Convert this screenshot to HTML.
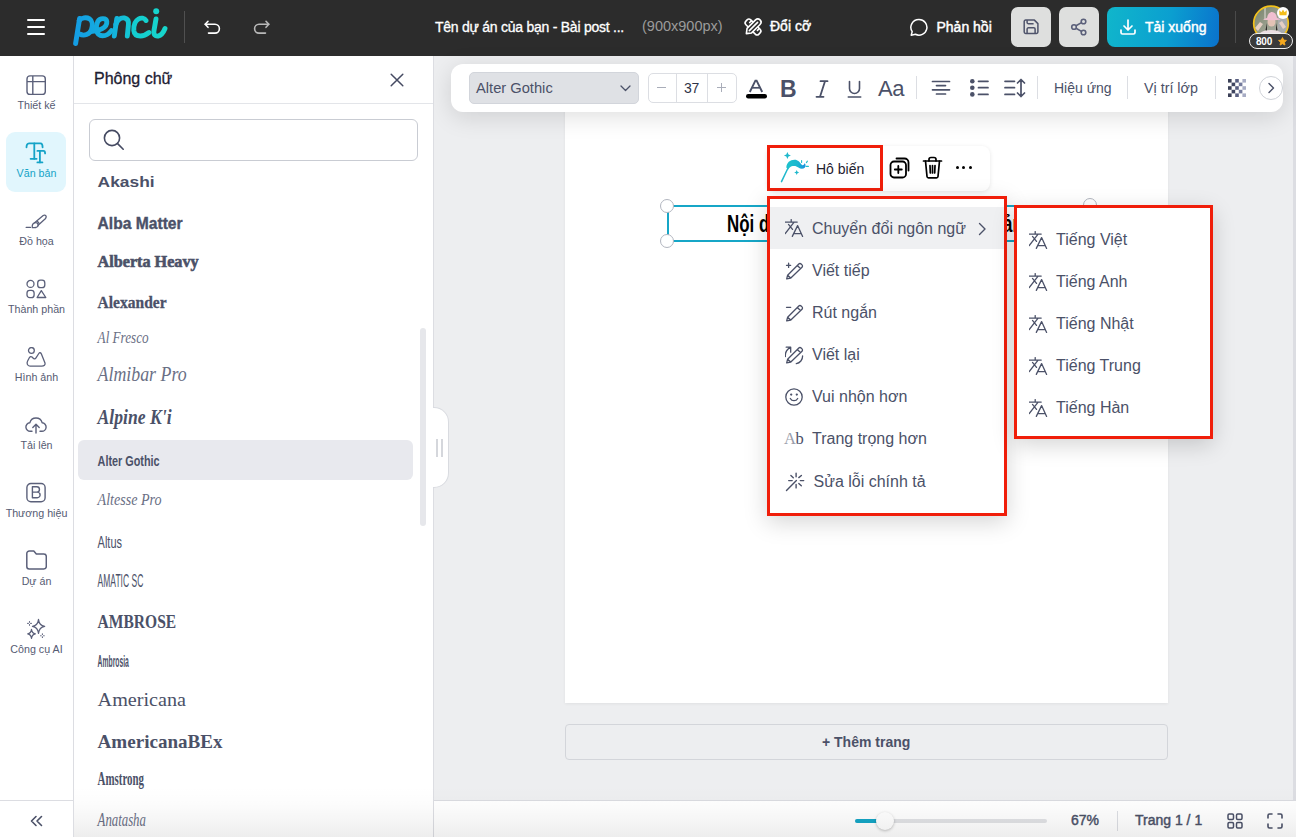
<!DOCTYPE html>
<html><head><meta charset="utf-8">
<style>
*{margin:0;padding:0;box-sizing:border-box}
html,body{width:1296px;height:837px;overflow:hidden;background:#edeef0;font-family:"Liberation Sans",sans-serif;position:relative}
.a{position:absolute}
svg{display:block}
#top{left:0;top:0;width:1296px;height:56px;background:#2c2c2c}
.tw{color:#fff;white-space:nowrap}
#side{left:0;top:56px;width:74px;height:781px;background:#fff;border-right:1px solid #dcdde2}
.si{left:6px;width:60px;height:60px;border-radius:9px}
.si .lb{position:absolute;left:-6px;width:72px;text-align:center;font-size:11px;color:#565b73;white-space:nowrap}
#panel{left:74px;top:56px;width:360px;height:781px;background:#fff;border-right:1px solid #dcdde2}
.fn{position:absolute;left:24px;color:#4b5168;white-space:nowrap}
#canvas{left:434px;top:56px;width:862px;height:744px;background:#edeef0}
#page{left:565px;top:104px;width:603px;height:599px;background:#fff}
#tb{left:451px;top:64px;width:832px;height:48px;background:#fff;border-radius:12px;box-shadow:0 5px 24px rgba(0,0,0,.13)}
.menu{background:#fff;box-shadow:0 6px 22px rgba(0,0,0,.17)}
.mi{position:absolute;left:0;height:42px;width:100%;font-size:15.5px;color:#4b5168;white-space:nowrap}
.red{border:3px solid #f01e0a}
#bot{left:434px;top:800px;width:862px;height:37px;background:#fff;border-top:1px solid #dadbe0}
.lbl{left:0;width:73px;text-align:center;font-size:10.7px;line-height:14px;color:#565b73;white-space:nowrap}
.mt{left:812px;font-size:16px;line-height:20px;color:#4b5168;white-space:nowrap}
.st{left:1029px}
</style></head><body>

<!-- TOP BAR -->
<div id="top" class="a">
  <div class="a" style="left:27px;top:19px;width:18px;height:2px;background:#fff;border-radius:1px"></div>
  <div class="a" style="left:27px;top:26px;width:18px;height:2px;background:#fff;border-radius:1px"></div>
  <div class="a" style="left:27px;top:33px;width:18px;height:2px;background:#fff;border-radius:1px"></div>
  <svg class="a" style="left:70px;top:6px" width="100" height="42" viewBox="0 0 100 42">
    <defs><linearGradient id="lg" gradientUnits="userSpaceOnUse" x1="5" y1="0" x2="95" y2="0"><stop offset="0" stop-color="#149de4"/><stop offset="0.45" stop-color="#14b4dc"/><stop offset="0.65" stop-color="#13cdd0"/><stop offset="1" stop-color="#17d6cc"/></linearGradient></defs>
    <g fill="none" stroke="url(#lg)" stroke-width="4.9" stroke-linecap="round" stroke-linejoin="round">
      <path d="M9.6 12.5L5.6 37.5"/>
      <path d="M9.2 14.5C11.5 11.5 16.5 11 19.5 12.8C22.5 14.8 22.8 19.5 21.5 23.5C19.8 28.5 14 30.5 9.5 28"/>
      <path d="M21 25.5C28 25.5 37.5 22 36.8 15.5C36.3 11.8 30 11.5 27.8 15.5C25.3 20.5 25.5 29.8 32.5 29.8C36 29.8 39.5 27.5 41.5 24.5"/>
      <path d="M44.3 30L46.8 12.5"/>
      <path d="M45.8 18.5C48 13 51.5 11.5 54.5 12C58.2 12.7 59 15.5 58.3 20L57.3 30"/>
      <path d="M76 14.5C74.5 11.8 71 11.5 68.5 13C64.8 15.2 63.5 20 63.8 24.5C64.2 28.5 67 30 70.5 30C73.5 30 76.5 28.5 79 26.5"/>
      <path d="M86 13L84 24.5C83.3 29 85.5 30.5 88.2 30C91.5 29.3 93.8 25.5 95 22.5"/>
    </g>
    <circle cx="86.2" cy="5.3" r="3" fill="#16d3cd"/>
  </svg>
  <div class="a" style="left:184px;top:11px;width:1px;height:32px;background:#505050"></div>
  <svg class="a" style="left:203px;top:20px" width="20" height="16" viewBox="0 0 20 16" fill="none" stroke="#fff" stroke-width="1.6" stroke-linecap="round" stroke-linejoin="round">
    <path d="M2.2 4.3h9.8a4.4 4.4 0 0 1 0 8.8H5.5"/><path d="M5 1.3L2.2 4.3 5 7.3"/>
  </svg>
  <svg class="a" style="left:251px;top:20px" width="20" height="16" viewBox="0 0 20 16" fill="none" stroke="#b9b9b9" stroke-width="1.6" stroke-linecap="round" stroke-linejoin="round">
    <path d="M17.8 4.3H8a4.4 4.4 0 0 0 0 8.8h6.5"/><path d="M15 1.3l2.8 3L15 7.3"/>
  </svg>
  <div class="a tw" style="left:435px;top:17.5px;font-size:14px;letter-spacing:-0.25px;line-height:18px;-webkit-text-stroke:0.3px #fff">Tên dự án của bạn - Bài post ...</div>
  <div class="a tw" style="left:642px;top:17px;font-size:14.5px;line-height:18px;color:#9b9b9b">(900x900px)</div>
  <svg class="a" style="left:740px;top:14px" width="26" height="26" viewBox="0 0 26 26" fill="none" stroke="#fff" stroke-width="1.6" stroke-linejoin="round" stroke-linecap="round">
    <g transform="rotate(45 13 13)"><rect x="3.8" y="9.6" width="18.4" height="6.8" rx="2.6"/><path d="M7.5 9.6v2.6M18.5 9.6v2.6"/></g>
    <g transform="rotate(-45 13 13)"><path d="M3.6 13L7.8 9.8H19.8A3.2 3.2 0 0 1 19.8 16.2H7.8Z" fill="#2c2c2c"/><path d="M7.8 13H19.5"/></g>
  </svg>
  <div class="a tw" style="left:770px;top:17px;font-size:14px;line-height:18px;-webkit-text-stroke:0.4px #fff">Đổi cỡ</div>
  <svg class="a" style="left:909px;top:18px" width="20" height="19" viewBox="0 0 20 19" fill="none" stroke="#fff" stroke-width="1.5" stroke-linejoin="round">
    <path d="M10 1.5a8 7.8 0 1 1-3.6 14.8L2.2 17.2l1-3.6A8 7.8 0 0 1 10 1.5z"/>
  </svg>
  <div class="a tw" style="left:936.5px;top:17.5px;font-size:14px;line-height:18px;-webkit-text-stroke:0.45px #fff">Phản hồi</div>
  <div class="a" style="left:1011px;top:7px;width:40px;height:40px;background:#dedfde;border-radius:7px"></div>
  <svg class="a" style="left:1021px;top:17px" width="20" height="20" viewBox="0 0 20 20" fill="none" stroke="#4f546b" stroke-width="1.5" stroke-linejoin="round">
    <path d="M3.2 4.5a1.4 1.4 0 0 1 1.4-1.4H13.4l3.5 3.5V15.1a1.4 1.4 0 0 1-1.4 1.4H4.6a1.4 1.4 0 0 1-1.4-1.4z"/><path d="M6.1 3.1V5.4a1.3 1.3 0 0 0 1.3 1.3H12.6"/><path d="M6.1 16.5V12.1a1.3 1.3 0 0 1 1.3-1.3h5.4a1.3 1.3 0 0 1 1.3 1.3V16.5"/>
  </svg>
  <div class="a" style="left:1059px;top:7px;width:40px;height:40px;background:#dedfde;border-radius:7px"></div>
  <svg class="a" style="left:1069px;top:17px" width="20" height="20" viewBox="0 0 20 20" fill="none" stroke="#5b607a" stroke-width="1.6">
    <circle cx="14.5" cy="4.5" r="2.3"/><circle cx="5" cy="10" r="2.3"/><circle cx="14.5" cy="15.5" r="2.3"/><path d="M7 8.8l5.5-3.2M7 11.2l5.5 3.2"/>
  </svg>
  <div class="a" style="left:1107px;top:7px;width:112px;height:40px;border-radius:8px;background:linear-gradient(100deg,#10b6cb,#0b9fd0 55%,#0a72cd)"></div>
  <svg class="a" style="left:1119px;top:18px" width="18" height="18" viewBox="0 0 18 18" fill="none" stroke="#fff" stroke-width="1.7" stroke-linecap="round" stroke-linejoin="round">
    <path d="M9 2v10M5 8l4 4 4-4"/><path d="M2 12v2.5A1.5 1.5 0 0 0 3.5 16h11a1.5 1.5 0 0 0 1.5-1.5V12"/>
  </svg>
  <div class="a tw" style="left:1145px;top:18px;font-size:14px;line-height:18px;-webkit-text-stroke:0.45px #fff">Tải xuống</div>
  <div class="a" style="left:1235px;top:11px;width:1px;height:32px;background:#4a4a4a"></div>
  <svg class="a" style="left:1250px;top:3px" width="42" height="40" viewBox="0 0 42 40">
    <defs><clipPath id="av"><circle cx="21" cy="20.5" r="17.3"/></clipPath>
    <linearGradient id="avbg" x1="0" y1="0" x2="1" y2="1"><stop offset="0" stop-color="#6f7c62"/><stop offset=".5" stop-color="#9aa08f"/><stop offset="1" stop-color="#b9b7b5"/></linearGradient></defs>
    <g clip-path="url(#av)">
      <rect x="0" y="0" width="42" height="40" fill="url(#avbg)"/>
      <rect x="14" y="3" width="2" height="14" fill="#c9c9c0" opacity=".7"/>
      <rect x="28" y="14" width="12" height="20" fill="#a9abad"/>
      <path d="M6 40c0-8 4-13 15-13s14 5 14 13z" fill="#ecdfe3"/>
      <path d="M5 25l5-6 3 2-5 7zM36 24l-4-6-3 2 4 6z" fill="#e6cfc4"/>
      <ellipse cx="21.5" cy="19" rx="4" ry="4.6" fill="#e3c3b5"/>
      <path d="M13 16.5c2-1 4-1.5 4-1.5 .5-4 2.5-6 5-6s4.5 2 5 6c0 0 2 .5 3.5 1.5-2 1-15 1-17.5 0z" fill="#f0bfd0"/>
      <path d="M17 20l-1.5 7 1.5.5zM26 20l1.5 7-1.5.5z" fill="#2d2a2a"/>
    </g>
    <circle cx="21" cy="20.5" r="17.3" fill="none" stroke="#f4c21b" stroke-width="1.7"/>
  </svg>
  <div class="a" style="left:1276.5px;top:6.5px;width:12px;height:12px;border-radius:50%;background:#fff"></div>
  <svg class="a" style="left:1278.5px;top:9px" width="8" height="7" viewBox="0 0 8 7"><path d="M0.5 6.3L0.2 1.2 2.4 3.2 4 0.4 5.6 3.2 7.8 1.2 7.5 6.3z" fill="#f3bd1a"/></svg>
  <div class="a" style="left:1249px;top:33px;width:44px;height:16px;border-radius:8px;background:#3a3a3a;border:1.3px solid #eeeeee"></div>
  <div class="a tw" style="left:1256px;top:34.5px;font-size:10px;font-weight:bold;line-height:13px;letter-spacing:-0.2px">800</div>
  <svg class="a" style="left:1277.5px;top:36.5px" width="9" height="9" viewBox="0 0 24 24"><path d="M12 1.5l3.2 6.8 7.3.9-5.4 5 1.4 7.3L12 17.9l-6.5 3.6 1.4-7.3-5.4-5 7.3-.9z" fill="#f5a91f" stroke="#f5a91f" stroke-width="2.5" stroke-linejoin="round"/></svg>
</div>
<!-- LEFT SIDEBAR -->
<div id="side" class="a">
  <div class="a" style="left:6px;top:76px;width:60px;height:60px;border-radius:9px;background:#e1f6fd"></div>
</div>
<svg class="a" style="left:26px;top:75px" width="21" height="21" viewBox="0 0 21 21" fill="none" stroke="#5b607a" stroke-width="1.4">
  <rect x="1" y="0.9" width="18.3" height="18.5" rx="3"/><path d="M1 6.6h18.3M6.8 0.9v18.5"/>
</svg>
<div class="a lbl" style="top:98px">Thiết kế</div>
<svg class="a" style="left:25px;top:142px" width="23" height="22" viewBox="0 0 23 22" fill="none" stroke="#15a3c7" stroke-width="1.8" stroke-linecap="round" stroke-linejoin="round">
  <path d="M1.5 5.3C1.5 3 2.3 1.4 4 1.4H15.5C17 1.4 17.6 3 17.6 5.3"/><path d="M9.3 1.4V16.8"/><path d="M5.6 16.8H11.6"/>
  <path d="M12.4 8.9H18.5C19.6 8.9 20.1 10 20.1 11.4"/><path d="M14.9 8.9V20.4"/><path d="M12.4 20.4H17.4"/>
</svg>
<div class="a lbl" style="top:166px;color:#15a3c7">Văn bản</div>
<svg class="a" style="left:25px;top:213px" width="22" height="17" viewBox="0 0 22 17" fill="none" stroke="#5b607a" stroke-width="1.3" stroke-linecap="round" stroke-linejoin="round">
  <path d="M1.2 14.4h4.3"/><path d="M7.3 14.6C7 12.5 7.5 10.6 9.5 9.8 11 9.3 12.5 10 13 11.3 13.5 12.8 12.5 14 11 14.5 9.8 14.8 8.5 14.7 7.3 14.6z"/>
  <path d="M9.6 9.7L18.2 2.5C19.2 1.8 20.6 2 21 3 21.4 4 21 5 20.3 5.8L13.1 12.3"/><path d="M12.3 8.3l1.7 1.9"/>
</svg>
<div class="a lbl" style="top:234px">Đồ họa</div>
<svg class="a" style="left:26px;top:279px" width="21" height="20" viewBox="0 0 21 20" fill="none" stroke="#5b607a" stroke-width="1.3" stroke-linejoin="round">
  <circle cx="4.5" cy="4.9" r="3.5"/><rect x="11.7" y="1.2" width="7.1" height="7.4" rx="2.7"/><rect x="1" y="11.4" width="7.1" height="7.3" rx="2.7"/><path d="M15.3 11.6L19.8 18.5H11.1z"/>
</svg>
<div class="a lbl" style="top:302px">Thành phần</div>
<svg class="a" style="left:26px;top:347px" width="21" height="21" viewBox="0 0 21 21" fill="none" stroke="#5b607a" stroke-width="1.3" stroke-linejoin="round">
  <circle cx="5.4" cy="3.5" r="2.9"/><path d="M4 19.1H15.8C18 19.1 19.6 17.8 19 16L15.4 7C14.8 5.5 13.6 5.3 12.8 6.5L10 10.8C9.2 12 8 12.2 7 11L6 10C5.2 9.3 4.3 9.4 3.6 10.3L1.6 14C.5 16.2 1.3 19.1 4 19.1z"/>
</svg>
<div class="a lbl" style="top:370px">Hình ảnh</div>
<svg class="a" style="left:25px;top:416px" width="22" height="18" viewBox="0 0 22 18" fill="none" stroke="#5b607a" stroke-width="1.4" stroke-linecap="round" stroke-linejoin="round">
  <path d="M7 15.3H5.5a4.3 4.3 0 0 1-.6-8.6 6.3 6.3 0 0 1 12.2 0 4.3 4.3 0 0 1-.6 8.6H15"/><path d="M11 17V8.5M7.8 11.5L11 8.3l3.2 3.2"/>
</svg>
<div class="a lbl" style="top:438px">Tải lên</div>
<svg class="a" style="left:26px;top:482px" width="21" height="21" viewBox="0 0 21 21" fill="none" stroke="#5b607a" stroke-width="1.4" stroke-linejoin="round">
  <rect x="0.9" y="1.5" width="18.2" height="18.2" rx="4"/><path d="M6.4 4.8h4.4a2.6 2.6 0 0 1 0 5.3H6.4zM6.4 10.1h4.9a2.8 2.8 0 0 1 0 5.6H6.4z"/>
</svg>
<div class="a lbl" style="top:506px">Thương hiệu</div>
<svg class="a" style="left:26px;top:550px" width="21" height="20" viewBox="0 0 21 20" fill="none" stroke="#5b607a" stroke-width="1.5" stroke-linejoin="round">
  <path d="M0.8 3.5A2.5 2.5 0 0 1 3.3 1h4.5l2.5 3h7.5a2.5 2.5 0 0 1 2.5 2.5v10a2.5 2.5 0 0 1-2.5 2.5H3.3A2.5 2.5 0 0 1 .8 16.5z"/>
</svg>
<div class="a lbl" style="top:574px">Dự án</div>
<svg class="a" style="left:26px;top:618px" width="20" height="22" viewBox="0 0 20 22" fill="none" stroke="#5b607a" stroke-width="1.2" stroke-linejoin="round" stroke-linecap="round">
  <path d="M12.5 1.4Q13.2 7.7 18.7 8.4 13.2 9.1 12.5 15.4 11.8 9.1 6.4 8.4 11.8 7.7 12.5 1.4z"/>
  <path d="M5.5 11.4Q6 15.4 9.4 15.9 6 16.4 5.5 20.4 5 16.4 1.7 15.9 5 15.4 5.5 11.4z"/>
  <path d="M3.5 3.6v.6M3.5 6.6v.6M1.7 5.4h.6M4.7 5.4h.6M16.4 15.9v.6M16.4 18.9v.6M14.6 17.7h.6M17.6 17.7h.6" stroke-width="1.1"/>
</svg>
<div class="a lbl" style="top:642px">Công cụ AI</div>
<div class="a" style="left:0;top:800px;width:73px;height:1px;background:#dcdde2"></div>
<svg class="a" style="left:30px;top:815px" width="13" height="12" viewBox="0 0 13 12" fill="none" stroke="#4b5168" stroke-width="1.6" stroke-linecap="round" stroke-linejoin="round">
  <path d="M6 1.5L1.5 6 6 10.5M11.5 1.5L7 6l4.5 4.5"/>
</svg>
<!-- CANVAS -->
<div id="canvas" class="a"></div>
<div class="a" style="left:1293px;top:56px;width:3px;height:744px;background:#dcdde2"></div>
<div id="page" class="a" style="box-shadow:0 1px 3px rgba(0,0,0,.06)"></div>
<!-- text box on page -->
<div class="a" style="left:667px;top:205px;width:423px;height:37px;border:2px solid #16a6c7;border-right:none"></div>
<div class="a" style="left:727px;top:208px;font-family:'Liberation Sans';font-weight:bold;font-size:23.5px;line-height:32px;color:#000;white-space:nowrap;transform:scaleX(.72);transform-origin:0 0">Nội dung</div>
<div class="a" style="left:1002.5px;top:208px;font-family:'Liberation Sans';font-weight:bold;font-size:23.5px;line-height:32px;color:#000;white-space:nowrap;transform:scaleX(.72);transform-origin:0 0">ản</div>
<div class="a" style="left:660px;top:199px;width:14px;height:14px;border-radius:50%;background:#fff;border:1px solid #b2b6bf"></div>
<div class="a" style="left:660px;top:234px;width:14px;height:14px;border-radius:50%;background:#fff;border:1px solid #b2b6bf"></div>
<div class="a" style="left:1083px;top:198px;width:14px;height:14px;border-radius:50%;background:#fff;border:1px solid #b2b6bf"></div>

<!-- TOOLBAR -->
<div id="tb" class="a"></div>
<div class="a" style="left:469px;top:72px;width:170px;height:32px;border-radius:5px;background:#dfe1e5;border:1px solid #d2d5db"></div>
<div class="a" style="left:476px;top:79px;font-size:14.7px;line-height:18px;color:#4b5168;white-space:nowrap">Alter Gothic</div>
<svg class="a" style="left:620px;top:85px" width="11" height="7" viewBox="0 0 11 7" fill="none" stroke="#4b5168" stroke-width="1.3" stroke-linecap="round" stroke-linejoin="round"><path d="M1 1l4.5 4.5L10 1"/></svg>
<div class="a" style="left:648px;top:73px;width:89px;height:30px;border:1px solid #dcdee3;border-radius:5px"></div>
<div class="a" style="left:676px;top:74px;width:1px;height:28px;background:#dcdee3"></div>
<div class="a" style="left:707px;top:74px;width:1px;height:28px;background:#dcdee3"></div>
<div class="a" style="left:657px;top:87px;width:9px;height:1.2px;background:#a9adb9"></div>
<div class="a" style="left:684px;top:79px;font-size:14px;line-height:18px;color:#2f3447;white-space:nowrap;letter-spacing:-0.3px">37</div>
<div class="a" style="left:717px;top:87px;width:9px;height:1.2px;background:#a9adb9"></div>
<div class="a" style="left:721px;top:83px;width:1.2px;height:9px;background:#a9adb9"></div>
<svg class="a" style="left:745px;top:79px" width="23" height="21" viewBox="0 0 23 21">
  <path d="M4.8 13L10.4 1.6h1.2L17.2 13" fill="none" stroke="#4b5168" stroke-width="1.9" stroke-linejoin="miter"/><path d="M7.2 8.8h7.6" stroke="#4b5168" stroke-width="1.7"/>
  <rect x="1" y="15" width="21" height="4.5" rx="2.2" fill="#000"/>
</svg>
<div class="a" style="left:780px;top:75px;font-size:23px;line-height:28px;font-weight:bold;color:#4b5168">B</div>
<svg class="a" style="left:815px;top:80px" width="14" height="18" viewBox="0 0 14 18" fill="none" stroke="#4b5168" stroke-width="1.8" stroke-linecap="round"><path d="M5.5 1.2h7M1.5 16.8h7M10 1.2L5 16.8"/></svg>
<svg class="a" style="left:847px;top:80px" width="15" height="18" viewBox="0 0 15 18" fill="none" stroke="#4b5168" stroke-width="1.6" stroke-linecap="round"><path d="M2.5 1.5v7a5 5 0 0 0 10 0v-7"/><path d="M1.2 17h12.6" stroke-width="1.4"/></svg>
<div class="a" style="left:878px;top:76px;font-size:22px;line-height:26px;color:#4b5168;letter-spacing:-0.5px">Aa</div>
<div class="a" style="left:916px;top:76px;width:1px;height:23px;background:#dcdee3"></div>
<svg class="a" style="left:931px;top:80px" width="20" height="16" viewBox="0 0 20 16" stroke="#4b5168" stroke-width="1.7" stroke-linecap="round"><path d="M1.5 1.5h17M5.5 5.6h9M1.5 9.8h17M5.5 14h9"/></svg>
<svg class="a" style="left:968px;top:78px" width="22" height="19" viewBox="0 0 22 19"><g fill="#4b5168"><circle cx="4.3" cy="3.3" r="2.3"/><circle cx="4.3" cy="9.7" r="2.3"/><circle cx="4.3" cy="16.4" r="2.3"/></g><path d="M10.5 3.3h9.5M10.5 9.7h9.5M10.5 16.4h9.5" stroke="#4b5168" stroke-width="1.7" stroke-linecap="round"/></svg>
<svg class="a" style="left:1003px;top:78px" width="24" height="20" viewBox="0 0 24 20" fill="none" stroke="#4b5168" stroke-width="1.7" stroke-linecap="round" stroke-linejoin="round"><path d="M2 3.3h9.5M2 9.7h9.5M2 16.4h9.5M18 1.5v17M14.5 5l3.5-3.5L21.5 5M14.5 15l3.5 3.5 3.5-3.5"/></svg>
<div class="a" style="left:1037px;top:76px;width:1px;height:23px;background:#dcdee3"></div>
<div class="a" style="left:1054px;top:79px;font-size:14px;line-height:18px;color:#4b5168;white-space:nowrap">Hiệu ứng</div>
<div class="a" style="left:1127px;top:76px;width:1px;height:23px;background:#dcdee3"></div>
<div class="a" style="left:1144px;top:79px;font-size:14.3px;line-height:18px;color:#4b5168;white-space:nowrap">Vị trí lớp</div>
<div class="a" style="left:1215px;top:76px;width:1px;height:23px;background:#dcdee3"></div>
<svg class="a" style="left:1228px;top:79px" width="18" height="18" viewBox="0 0 5 5"><rect x="0" y="0" width="1" height="1" fill="#3b4057"/><rect x="2" y="0" width="1" height="1" fill="#5a6082"/><rect x="4" y="0" width="1" height="1" fill="#a7acc4"/><rect x="1" y="1" width="1" height="1" fill="#3f4560"/><rect x="3" y="1" width="1" height="1" fill="#737a9c"/><rect x="0" y="2" width="1" height="1" fill="#3b4057"/><rect x="2" y="2" width="1" height="1" fill="#5a6082"/><rect x="4" y="2" width="1" height="1" fill="#a7acc4"/><rect x="1" y="3" width="1" height="1" fill="#3f4560"/><rect x="3" y="3" width="1" height="1" fill="#737a9c"/><rect x="0" y="4" width="1" height="1" fill="#3b4057"/><rect x="2" y="4" width="1" height="1" fill="#5a6082"/><rect x="4" y="4" width="1" height="1" fill="#a7acc4"/></svg>
<div class="a" style="left:1259px;top:76px;width:24px;height:24px;border-radius:50%;background:#fff;border:1px solid #cfd2d8"></div>
<svg class="a" style="left:1267px;top:82px" width="8" height="12" viewBox="0 0 8 12" fill="none" stroke="#4b5168" stroke-width="1.4" stroke-linecap="round" stroke-linejoin="round"><path d="M2 1.5L6.5 6 2 10.5"/></svg>

<!-- FLOATING ACTION BAR -->
<div class="a" style="left:767px;top:146px;width:223px;height:45px;background:#fff;border-radius:8px;box-shadow:0 1px 4px rgba(0,0,0,.10)"></div>
<div class="a red" style="left:767px;top:145px;width:116px;height:46px"></div>
<svg class="a" style="left:779px;top:151px" width="32" height="33" viewBox="0 0 32 33">
  <defs><linearGradient id="wg" x1="0" y1="0" x2="1" y2="0"><stop offset="0" stop-color="#1ec3cc"/><stop offset=".6" stop-color="#1bb6d0"/><stop offset="1" stop-color="#1a8fe0"/></linearGradient></defs>
  <g fill="#1fb8cc">
    <path d="M8.4 1l1.1 2.4 2.4 1.1-2.4 1.1-1.1 2.4-1.1-2.4L4.9 4.5l2.4-1.1z"/>
    <path d="M17.7 19l.8 1.7 1.7.8-1.7.8-.8 1.7-.8-1.7-1.7-.8 1.7-.8z"/>
  </g>
  <path d="M7.3 16.5C7.6 11.5 11 8.7 15.5 8.7 19.2 8.7 20.8 11.2 22.3 13.3 23.3 14.8 24.8 14.6 25.6 12.3 26.8 13 26.9 15.6 25.7 16.8 24.2 18.3 21.4 18.2 19.4 16.6 17.6 15.2 16 14.6 13.6 15.1 11.3 15.6 9.8 17.4 9.3 18.5z" fill="url(#wg)"/>
  <path d="M8.8 17.5L2.5 30.6" stroke="#1fb8cc" stroke-width="1.5" stroke-linecap="round"/>
  <path d="M22.6 9.6v1.8M28.4 10.1l-1 1.5M27.1 15.4h2.3" stroke="#1fc0cc" stroke-width="1.1" stroke-linecap="round"/>
</svg>
<div class="a" style="left:816px;top:160px;font-size:14px;line-height:18px;color:#1f2230;white-space:nowrap">Hô biến</div>
<svg class="a" style="left:889px;top:157px" width="22" height="22" viewBox="0 0 22 22" fill="none" stroke="#000" stroke-width="1.8" stroke-linecap="round" stroke-linejoin="round">
  <rect x="1.5" y="4.5" width="15.5" height="16" rx="3.5"/><path d="M7.5 1.5h8a4 4 0 0 1 4 4v8"/><path d="M9.3 9v7M5.8 12.5h7"/>
</svg>
<svg class="a" style="left:922px;top:156px" width="21" height="23" viewBox="0 0 21 23" fill="none" stroke="#000" stroke-width="1.7" stroke-linecap="round" stroke-linejoin="round">
  <path d="M1.5 5h18"/><path d="M7 5V3.5a2 2 0 0 1 2-2h3a2 2 0 0 1 2 2V5"/><path d="M3.5 5l1.5 15.5a1.5 1.5 0 0 0 1.5 1.3h8a1.5 1.5 0 0 0 1.5-1.3L17.5 5"/><path d="M8 9.5l.3 7.5M10.5 9.5v7.5M13 9.5l-.3 7.5"/>
</svg>
<g></g>
<div class="a" style="left:955.6px;top:166.4px;width:3px;height:3px;border-radius:50%;background:#000"></div>
<div class="a" style="left:962.4px;top:166.4px;width:3px;height:3px;border-radius:50%;background:#000"></div>
<div class="a" style="left:969.2px;top:166.4px;width:3px;height:3px;border-radius:50%;background:#000"></div>

<!-- MAIN MENU -->
<div class="a menu" style="left:767px;top:196px;width:240px;height:320px"></div>
<div class="a" style="left:770px;top:207px;width:234px;height:42px;background:#eff0f2"></div>
<div class="a red" style="left:767px;top:196px;width:240px;height:320px"></div>

<!-- SUB MENU -->
<div class="a menu" style="left:1014px;top:205px;width:199px;height:234px;border-radius:6px"></div>
<div class="a red" style="left:1014px;top:205px;width:199px;height:234px"></div>

<!-- MENU ITEMS -->
<svg class="a" style="left:785px;top:219px" width="19" height="19" viewBox="0 0 19 19" fill="none" stroke="#4b5168" stroke-width="1.3" stroke-linecap="round" stroke-linejoin="round">
  <path d="M0.2 3.1h12M6.2 0.6v2.5M9.1 3.1L0.2 14.5M3.5 5.4l4 5"/><path d="M7.3 17.4L12.6 6.6 17.6 17.4M9 14.7h7"/>
</svg>
<div class="a mt" style="top:219px">Chuyển đổi ngôn ngữ</div>
<svg class="a" style="left:978px;top:222px" width="9" height="14" viewBox="0 0 9 14" fill="none" stroke="#4b5168" stroke-width="1.4" stroke-linecap="round" stroke-linejoin="round"><path d="M1.5 1.5L7 7l-5.5 5.5"/></svg>

<svg class="a" style="left:785px;top:262px" width="19" height="18" viewBox="0 0 19 18" fill="none" stroke="#4b5168" stroke-width="1.3" stroke-linecap="round" stroke-linejoin="round">
  <path d="M3.6 1.2v4.2M1.5 3.3h4.2"/><path d="M1.7 16.8l.9-3.6L13.8 2a1.6 1.6 0 0 1 2.3 0l.9.9a1.6 1.6 0 0 1 0 2.3L5.8 16l-4.1.8zM2.6 13.2l3.2 2.8M12.3 3.5l3.2 3"/>
</svg>
<div class="a mt" style="top:261px">Viết tiếp</div>

<svg class="a" style="left:785px;top:304px" width="19" height="18" viewBox="0 0 19 18" fill="none" stroke="#4b5168" stroke-width="1.3" stroke-linecap="round" stroke-linejoin="round">
  <path d="M1.5 3.3h4.2"/><path d="M1.7 16.8l.9-3.6L13.8 2a1.6 1.6 0 0 1 2.3 0l.9.9a1.6 1.6 0 0 1 0 2.3L5.8 16l-4.1.8zM2.6 13.2l3.2 2.8M12.3 3.5l3.2 3"/>
</svg>
<div class="a mt" style="top:303px">Rút ngắn</div>

<svg class="a" style="left:785px;top:346px" width="19" height="19" viewBox="0 0 19 19" fill="none" stroke="#4b5168" stroke-width="1.3" stroke-linecap="round" stroke-linejoin="round">
  <path d="M1.7 16.8l.9-3.6L13.8 2a1.6 1.6 0 0 1 2.3 0l.9.9a1.6 1.6 0 0 1 0 2.3L5.8 16l-4.1.8zM2.6 13.2l3.2 2.8M12.3 3.5l3.2 3"/>
  <path d="M0.4 10.5A9 9 0 0 1 5.3 1.6M1.2 1.2H5.7V6.2"/><path d="M17.6 10a7.5 7.5 0 0 1-6.3 7.6"/>
</svg>
<div class="a mt" style="top:345px">Viết lại</div>

<svg class="a" style="left:785px;top:388px" width="18" height="18" viewBox="0 0 18 18" fill="none" stroke="#4b5168" stroke-width="1.3" stroke-linecap="round">
  <circle cx="9" cy="9" r="8.2"/><path d="M5.3 10.5a4.2 4.2 0 0 0 7.4 0"/><circle cx="6.2" cy="6.6" r=".5" fill="#4b5168"/><circle cx="11.8" cy="6.6" r=".5" fill="#4b5168"/>
</svg>
<div class="a mt" style="top:387px">Vui nhộn hơn</div>

<div class="a" style="left:784px;top:429px;font-family:'Liberation Serif';font-size:16.5px;line-height:20px;color:#4b5168;letter-spacing:-0.5px"><span style="color:#9a9eac">A</span>b</div>
<div class="a mt" style="top:429px">Trang trọng hơn</div>

<svg class="a" style="left:785px;top:472px" width="20" height="20" viewBox="0 0 20 20" fill="none" stroke="#4b5168" stroke-width="1.4" stroke-linecap="round">
  <path d="M1.5 18.4L11.4 8.4"/><path d="M11.1 1.3v3.4M11.1 12.5v3.4M3.7 8.6h3.5M15.3 8.6h3.4M5.9 3.5l2.4 2.3M16.4 3.5l-2.6 2.1M13.8 11.4l2.5 2.3"/>
</svg>
<div class="a mt" style="top:472px;left:813.5px">Sửa lỗi chính tả</div>

<!-- SUBMENU ITEMS -->
<svg class="a st" style="top:231px" width="19" height="19" viewBox="0 0 19 19" fill="none" stroke="#4b5168" stroke-width="1.3" stroke-linecap="round" stroke-linejoin="round"><path d="M0.2 3.1h12M6.2 0.6v2.5M9.1 3.1L0.2 14.5M3.5 5.4l4 5"/><path d="M7.3 17.4L12.6 6.6 17.6 17.4M9 14.7h7"/></svg>
<div class="a mt" style="left:1056px;top:230px">Tiếng Việt</div>
<svg class="a st" style="top:273px" width="19" height="19" viewBox="0 0 19 19" fill="none" stroke="#4b5168" stroke-width="1.3" stroke-linecap="round" stroke-linejoin="round"><path d="M0.2 3.1h12M6.2 0.6v2.5M9.1 3.1L0.2 14.5M3.5 5.4l4 5"/><path d="M7.3 17.4L12.6 6.6 17.6 17.4M9 14.7h7"/></svg>
<div class="a mt" style="left:1056px;top:272px">Tiếng Anh</div>
<svg class="a st" style="top:315px" width="19" height="19" viewBox="0 0 19 19" fill="none" stroke="#4b5168" stroke-width="1.3" stroke-linecap="round" stroke-linejoin="round"><path d="M0.2 3.1h12M6.2 0.6v2.5M9.1 3.1L0.2 14.5M3.5 5.4l4 5"/><path d="M7.3 17.4L12.6 6.6 17.6 17.4M9 14.7h7"/></svg>
<div class="a mt" style="left:1056px;top:314px">Tiếng Nhật</div>
<svg class="a st" style="top:357px" width="19" height="19" viewBox="0 0 19 19" fill="none" stroke="#4b5168" stroke-width="1.3" stroke-linecap="round" stroke-linejoin="round"><path d="M0.2 3.1h12M6.2 0.6v2.5M9.1 3.1L0.2 14.5M3.5 5.4l4 5"/><path d="M7.3 17.4L12.6 6.6 17.6 17.4M9 14.7h7"/></svg>
<div class="a mt" style="left:1056px;top:356px">Tiếng Trung</div>
<svg class="a st" style="top:399px" width="19" height="19" viewBox="0 0 19 19" fill="none" stroke="#4b5168" stroke-width="1.3" stroke-linecap="round" stroke-linejoin="round"><path d="M0.2 3.1h12M6.2 0.6v2.5M9.1 3.1L0.2 14.5M3.5 5.4l4 5"/><path d="M7.3 17.4L12.6 6.6 17.6 17.4M9 14.7h7"/></svg>
<div class="a mt" style="left:1056px;top:398px">Tiếng Hàn</div>

<!-- ADD PAGE -->
<div class="a" style="left:565px;top:724px;width:603px;height:36px;border:1px solid #d3d5da;border-radius:4px"></div>
<div class="a" style="left:822px;top:733px;font-size:14px;font-weight:bold;line-height:18px;color:#4b5168;white-space:nowrap">+ Thêm trang</div>

<!-- BOTTOM BAR -->
<div id="bot" class="a"></div>
<div class="a" style="left:855px;top:819px;width:192px;height:4px;border-radius:2px;background:#e1e2e5"></div>
<div class="a" style="left:855px;top:819px;width:30px;height:4px;border-radius:2px;background:#15a6c6"></div>
<div class="a" style="left:876px;top:812px;width:18px;height:18px;border-radius:50%;background:#fff;box-shadow:0 1px 3px rgba(0,0,0,.25)"></div>
<div class="a" style="left:1071px;top:812px;font-size:14px;line-height:17px;color:#4b5168;white-space:nowrap;-webkit-text-stroke:0.45px #4b5168">67%</div>
<div class="a" style="left:1117px;top:811px;width:1px;height:20px;background:#dcdee3"></div>
<div class="a" style="left:1135px;top:812px;font-size:14px;line-height:17px;color:#4b5168;white-space:nowrap;-webkit-text-stroke:0.45px #4b5168">Trang 1 / 1</div>
<svg class="a" style="left:1227px;top:813px" width="16" height="16" viewBox="0 0 16 16" fill="none" stroke="#4b5168" stroke-width="1.5"><rect x="1" y="1" width="5.5" height="5.5" rx="1.2"/><rect x="9.5" y="1" width="5.5" height="5.5" rx="1.2"/><rect x="1" y="9.5" width="5.5" height="5.5" rx="1.2"/><rect x="9.5" y="9.5" width="5.5" height="5.5" rx="1.2"/></svg>
<svg class="a" style="left:1267px;top:813px" width="16" height="16" viewBox="0 0 16 16" fill="none" stroke="#4b5168" stroke-width="1.6" stroke-linecap="round"><path d="M1 5V2.5A1.5 1.5 0 0 1 2.5 1H5M11 1h2.5A1.5 1.5 0 0 1 15 2.5V5M15 11v2.5a1.5 1.5 0 0 1-1.5 1.5H11M5 15H2.5A1.5 1.5 0 0 1 1 13.5V11"/></svg>
<!-- FONT PANEL -->
<div id="panel" class="a">
  <div class="a" style="left:0;top:47px;width:359px;height:1px;background:#e3e5e9"></div>
</div>
<div class="a" style="left:94px;top:69px;font-size:16px;line-height:20px;color:#1d2033;white-space:nowrap;-webkit-text-stroke:0.3px #1d2033">Phông chữ</div>
<svg class="a" style="left:390px;top:73px" width="14" height="14" viewBox="0 0 14 14" fill="none" stroke="#454a62" stroke-width="1.5" stroke-linecap="round">
  <path d="M1.2 1.2l11.6 11.6M12.8 1.2L1.2 12.8"/>
</svg>
<div class="a" style="left:89px;top:119px;width:329px;height:42px;border:1px solid #c9ccd3;border-radius:6px;background:#fff"></div>
<svg class="a" style="left:103px;top:129px" width="22" height="22" viewBox="0 0 22 22" fill="none" stroke="#454a62" stroke-width="1.6" stroke-linecap="round">
  <circle cx="9" cy="9" r="7.6"/><path d="M14.6 14.6l5.6 5.6"/>
</svg>
<div class="a" style="left:78px;top:440px;width:335px;height:40px;border-radius:6px;background:#e8e9ee"></div>
<div class="a" style="left:420px;top:328px;width:6px;height:198px;border-radius:3px;background:#e6e7eb"></div>
<svg class="a" style="left:74px;top:56px" width="359" height="781" viewBox="0 0 359 781" fill="#4b5168">
  <g transform="translate(-74,-56)">
  <text x="97.6" y="187.3" font-family="Liberation Sans" font-weight="bold" font-size="15.5" textLength="57" lengthAdjust="spacingAndGlyphs">Akashi</text>
  <text x="97.6" y="228.5" font-family="Liberation Sans" font-weight="bold" font-size="17" stroke="#4b5168" stroke-width="0.4" textLength="85" lengthAdjust="spacingAndGlyphs">Alba Matter</text>
  <text x="97.6" y="267.3" font-family="Liberation Serif" font-weight="bold" font-size="16.5" stroke="#4b5168" stroke-width="0.6" textLength="101" lengthAdjust="spacingAndGlyphs">Alberta Heavy</text>
  <text x="97.6" y="308" font-family="Liberation Serif" font-weight="bold" font-size="17.5" stroke="#4b5168" stroke-width="0.3" textLength="69" lengthAdjust="spacingAndGlyphs">Alexander</text>
  <text fill="#6a6f85" x="97.6" y="343" font-family="Liberation Serif" font-style="italic" font-size="16" textLength="51" lengthAdjust="spacingAndGlyphs">Al Fresco</text>
  <text fill="#6a6f85" x="97.6" y="381" font-family="Liberation Serif" font-style="italic" font-size="20" textLength="89" lengthAdjust="spacingAndGlyphs">Almibar Pro</text>
  <text x="97.6" y="424" font-family="Liberation Serif" font-weight="bold" font-style="italic" font-size="20" textLength="74" lengthAdjust="spacingAndGlyphs">Alpine K'i</text>
  <text x="97.6" y="466.4" font-family="Liberation Sans" font-weight="bold" font-size="15" textLength="62" lengthAdjust="spacingAndGlyphs">Alter Gothic</text>
  <text fill="#6a6f85" x="97.6" y="505" font-family="Liberation Serif" font-style="italic" font-size="17" textLength="64" lengthAdjust="spacingAndGlyphs">Altesse Pro</text>
  <text x="97.6" y="547.6" font-family="Liberation Sans" font-size="17" textLength="24.4" lengthAdjust="spacingAndGlyphs">Altus</text>
  <text x="97.6" y="587" font-family="Liberation Sans" font-size="18" textLength="45.7" lengthAdjust="spacingAndGlyphs">AMATIC SC</text>
  <text x="97.6" y="627.9" font-family="Liberation Serif" font-weight="bold" font-size="18" textLength="78.6" lengthAdjust="spacingAndGlyphs">AMBROSE</text>
  <text x="97.6" y="666.9" font-family="Liberation Sans" font-weight="bold" font-size="17" textLength="31.3" lengthAdjust="spacingAndGlyphs">Ambrosia</text>
  <text x="97.6" y="706" font-family="Liberation Serif" font-size="18" textLength="88.4" lengthAdjust="spacingAndGlyphs">Americana</text>
  <text x="97.6" y="747.9" font-family="Liberation Serif" font-weight="bold" font-size="19.5" textLength="125" lengthAdjust="spacingAndGlyphs">AmericanaBEx</text>
  <text x="97.6" y="785" font-family="Liberation Serif" font-weight="bold" font-size="19" textLength="46.4" lengthAdjust="spacingAndGlyphs">Amstrong</text>
  <text fill="#6a6f85" x="97.6" y="826" font-family="Liberation Serif" font-style="italic" font-size="18" textLength="48.3" lengthAdjust="spacingAndGlyphs">Anatasha</text>
  </g>
</svg>

<!-- HANDLE -->
<div class="a" style="left:433px;top:407px;width:16px;height:81px;background:#fff;border:1px solid #d9dbe0;border-left:none;border-radius:0 15px 15px 0"></div>
<div class="a" style="left:436px;top:439px;width:1.5px;height:18px;background:#d5d7dc"></div>
<div class="a" style="left:441px;top:439px;width:1.5px;height:18px;background:#d5d7dc"></div>

<div class="a" style="left:74px;top:786px;width:1222px;height:51px;background:linear-gradient(rgba(0,0,0,0) 0%,rgba(0,0,0,.012) 35%,rgba(0,0,0,.035) 65%,rgba(0,0,0,.07) 100%);pointer-events:none"></div>

</body></html>
